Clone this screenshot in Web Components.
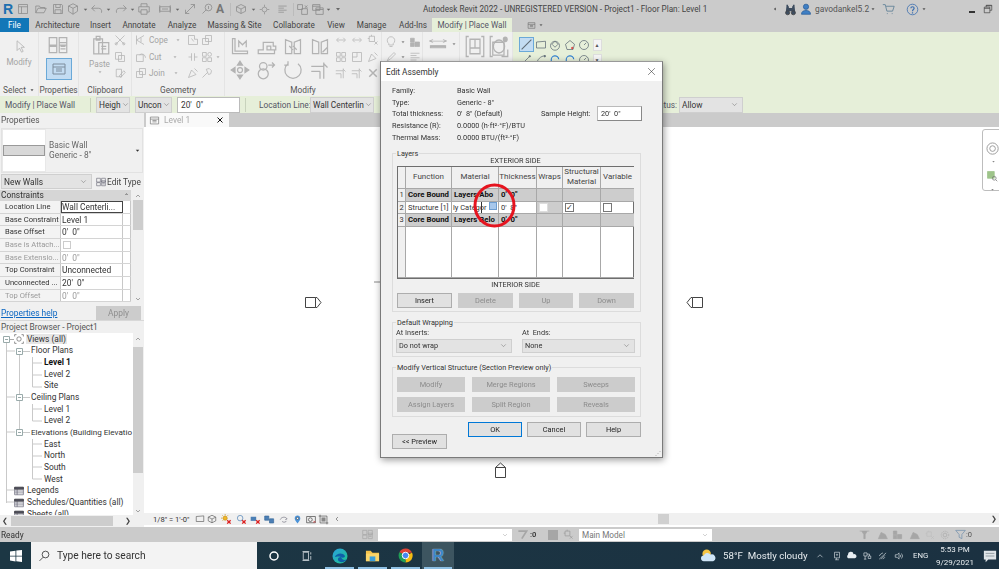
<!DOCTYPE html>
<html lang="en">
<head>
<meta charset="utf-8">
<title>Autodesk Revit 2022</title>
<style>
  html, body { margin: 0; height: 100%; overflow: hidden; background: #fff; }
  body { font-family: Roboto, "Noto Sans", sans-serif; }
</style>
</head>
<body>
<rv-app></rv-app>
<script>
'use strict';

// icon bodies, all on a 16x16 grid, stroke comes from currentColor
const ICONS = {
  cursor: '<path d="M5 1v12l3-3 2.500 5 2-1-2.500-5H14z"/>',
  page: '<path d="M2 2h12v12H2zM2 5h12M6 5v9"/>',
  open: '<path d="M1 13V4h5l1 2h6v2M1 13l3-6h11l-3 6z"/>',
  save: '<path d="M2 2h11l1 1v11H2zM5 2v4h6V2M4 14V9h8v5"/>',
  sync: '<path d="M8 1l6 3v7l-6 4-6-4V4zM2 4l6 3 6-3M8 7v8"/>',
  undo: '<path d="M5 3L1 7l4 4M1 7h9c3 0 5 2 4 6"/>',
  redo: '<path d="M11 3l4 4-4 4M15 7H6c-3 0-5 2-4 6"/>',
  print: '<path d="M4 5V1h8v4M4 12H1V5h14v7h-3M4 9h8v6H4z"/>',
  measure: '<path d="M1 5h14v6H1zM1 3v10M15 3v10M4 8h8"/>',
  align: '<path d="M2 14L14 2M2 9v5h5M9 2h5v5"/>',
  tag: '<path d="M2 14l5-5"/><circle cx="10" cy="6" r="4.500"/><path d="M10 4v4"/>',
  cube: '<path d="M8 2l6 3v6l-6 3-6-3V5zM2 5l6 3 6-3M8 8v6"/>',
  section: '<circle cx="8" cy="8" r="3.500"/><path d="M8 1v3M8 12v3M1 8h3M12 8h3"/>',
  lines: '<path d="M2 3h12M2 6h8M2 9h12M2 12h8"/>',
  closeh: '<path d="M2 2h6v6H2zM7 7h7v7H7zM11 3l3 3M14 3l-3 3"/>',
  windows: '<path d="M2 2h9v7H2zM6 6h9v8H6zM2 4h9M6 8h9"/>',
  caret: '<path d="M4 6h8l-4 5z" fill="currentColor" stroke="none"/>',
  chevron: '<path d="M4 6l4 4 4-4"/>',
  pile: '<path d="M1 2h6v6H1zM9 2h6v6H9zM1 9h6v5H1zM9 6h6v8H9zM10 9h4M10 11h4"/>',
  props: '<path d="M2 3h12v10H2zM2 6h12M5 8h6M5 10h6"/>',
  paste: '<path d="M3 3h7v12H3zM5 1h3v3H5zM7 6h8v9H7zM9 9h4M9 11h4"/>',
  scissors: '<path d="M2 2l12 12M14 2L2 14"/><circle cx="3" cy="13" r="1.500"/><circle cx="13" cy="13" r="1.500"/>',
  copy: '<path d="M2 2h8v9H2zM6 6h8v8H6z"/>',
  match: '<path d="M3 3h7v10H3zM7 12l6-7 2 2-6 7z"/>',
  cope: '<path d="M2 2v12M2 8l10-6M2 8l10 6M8 5v6"/>',
  cut: '<path d="M2 5h9v9H2zM6 5a5 5 0 0 1 8 4"/>',
  join: '<path d="M2 6h8v8H2zM6 2h8v8H6z"/>',
  wallj: '<path d="M2 2h8v5h4v7H2zM6 6l3 4"/>',
  shapes: '<path d="M2 2h5v5H2zM9 9h5v5H9zM9 4.500a2.500 2.500 0 1 0 5 0 2.500 2.500 0 1 0-5 0M2 9h5v5H2z"/>',
  hammer: '<path d="M2 14l7-7M7 3l4-1 3 3-1 4-3 1z"/>',
  pin: '<path d="M2 14L6 4l6 6zM10 2l4 4"/>',
  levels: '<path d="M2 14V2h2v10h10v2zM7 9V4l3 3 3-3v5"/>',
  offset: '<path d="M1 11h4V5h8v3h2v3h-4V8H8v3h6v3H1z"/>',
  gate: '<path d="M2 14V3l5 2v9zM14 14V3L9 5v9zM5 8l3 3M8 8l3 3"/>',
  mirror: '<path d="M2 14V3l5 2v9zM14 14V3L9 5v9zM10 13l4-4"/>',
  move: '<path d="M8 1l2 3H6zM8 15l2-3H6zM1 8l3-2v4zM15 8l-3-2v4z" fill="currentColor"/><circle cx="8" cy="8" r="2"/>',
  copy2: '<circle cx="5" cy="11" r="4"/><circle cx="5" cy="5" r="3"/><path d="M9 4h5M12 2l2 2-2 2"/>',
  rotate: '<path d="M12 3a6.500 6.500 0 1 1-8 0M4 1v3H1"/>',
  trim: '<path d="M1 5h10M1 9h7M11 2v13M14 6l-3-3M8 9v6"/>',
  ends: '<path d="M3 8h10M5 5L2 8l3 3M11 5l3 3-3 3"/>',
  grid4: '<path d="M2 2h5v5H2zM9 2h5v5H9zM2 9h5v5H2zM9 9h5v5H9z"/>',
  square: '<path d="M2 2h12v12H2zM2 8h6V2"/>',
  pinx: '<path d="M3 3h7v7H3zM10 10l4 4M14 10l-4 4M6 1v2M1 6h2"/>',
  split: '<path d="M2 8h4M10 8h4M6 3v10M10 3v10"/>',
  xmark: '<path d="M3 3l10 10M13 3L3 13" stroke-width="2"/>',
  xthin: '<path d="M2 2l12 12M14 2L2 14"/>',
  bulb: '<path d="M5 10a5 5 0 1 1 6 0v2H5zM6 14h4"/>',
  brush: '<path d="M3 13l2-4 7-7 2 2-7 7z"/>',
  dim: '<path d="M1 4h14M1 4l3-2M1 4l3 2M15 4l-3-2M15 4l-3 2"/><path d="M2 10h12v3H2z" fill="currentColor"/>',
  boxes: '<path d="M3 1H1v14h2M13 1h2v14h-2M4 3h4v6H4zM4 9h8v4H4zM8 3h4v6"/>',
  sphere: '<path d="M3 1H1v14h2M10 15h5v-5"/><path d="M3 5h9v9H3z"/><circle cx="8" cy="8" r="4.500"/><circle cx="13" cy="3" r="1.500" fill="currentColor"/>',
  line: '<path d="M2 14L14 2" stroke-width="1.300"/>',
  rect: '<path d="M2 4l12-1v9H2z"/>',
  poly1: '<circle cx="8" cy="9" r="6"/><path d="M8 3l4 4-4 4-4-4z"/>',
  poly2: '<path d="M8 2l6 5-2 7H4L2 7z"/><circle cx="11" cy="12" r="1" fill="#d33" stroke="#d33"/>',
  circle: '<circle cx="8" cy="8" r="6"/><path d="M8 8l3-3"/>',
  spline: '<path d="M2 14L12 4"/><circle cx="13" cy="3" r="1" fill="currentColor"/>',
  arc: '<path d="M2 14C3 7 7 3 14 2"/><circle cx="13" cy="3" r="1" fill="currentColor"/>',
  arcb: '<path d="M3 14V8a5 5 0 0 1 10-1" stroke="#2f7fd0" stroke-width="1.500"/>',
  views: '<path d="M1 4V1h3M12 1h3v3M1 12v3h3M15 12v3h-3"/><circle cx="8" cy="8" r="3.500"/>',
  list: '<path d="M1 2h14v12H1zM1 5h14M1 8h14M1 11h14M5 5v9" stroke="#556"/><path d="M1 2h14v3H1z" fill="#556"/>',
  binoc: '<path d="M2 13l1-9h3v9zM14 13l-1-9h-3v9zM6 6h4v4H6zM3 2h2v2H3zM11 2h2v2h-2z" fill="#3d4d60" stroke="none"/><circle cx="4.500" cy="12" r="2.500" fill="#3d4d60"/><circle cx="11.500" cy="12" r="2.500" fill="#3d4d60"/>',
  user: '<circle cx="8" cy="5" r="3.500" fill="#3f7fc4" stroke="#2a5e9a"/><path d="M2 15c0-4 3-5 6-5s6 1 6 5z" fill="#3f7fc4" stroke="#2a5e9a"/>',
  cart: '<path d="M1 2h3l2 8h7l2-6H5M6 13h1M12 13h1"/>',
  help: '<circle cx="8" cy="8" r="6.500" stroke="#3c6fb0"/><path d="M6 6.500C6 4 10 4 10 6.500 10 8 8 8 8 10M8 11.500v1.500" stroke="#3c6fb0" stroke-width="1.500"/>',
  restore: '<path d="M5 5V2h9v8h-3M2 5h9v9H2zM2 7h9M5 2.800h9" stroke="#333"/>',
  search: '<circle cx="10" cy="6" r="4.500"/><path d="M7 9.500L2 14.500"/>',
  taskview: '<path d="M3 3h7v10H3zM2 2h9M2 14h9M13 3v3M13 8v5"/>',
  notify: '<path d="M1 2h14v10H6l-3 3v-3H1z" fill="#dfe4e8" stroke="none"/><path d="M3 5h10M3 8h10" stroke="#8a959c"/>',
  tower: '<path d="M1 3h14M4 3l3 5v6h2V8l3-5" fill="currentColor"/>',
  house: '<path d="M2 14l4-9 6 3 3 6zM4 10h9" fill="currentColor"/>',
  blocks: '<path d="M2 3h5v5H2zM8 8h6v6H8zM2 9h5v5H2z" fill="currentColor"/>',
  funnel: '<path d="M1 2h14L10 8v6l-4-2V8z" stroke="#6d8cab"/>',
  gear: '<circle cx="8" cy="8" r="3"/><circle cx="8" cy="8" r="6" stroke-dasharray="2 1.500"/>',
  sunx: '<circle cx="6" cy="6" r="3" fill="#f0b82a" stroke="#c89015"/><path d="M6 0v2M0 6h2M2 2l1 1M10 2L9 3M2 10l1-1" stroke="#c89015"/><path d="M9 9l5 5M14 9l-5 5" stroke="#d22" stroke-width="2"/>',
  glassx: '<circle cx="6" cy="6" r="4" stroke="#4b7fb5"/><path d="M9 9l5 5M14 9l-5 5" stroke="#d22" stroke-width="2"/>',
  shadow: '<path d="M1 4h8v6H1z" fill="#4b7fb5" stroke="none"/><path d="M9 9l5 5M14 9l-5 5" stroke="#d22" stroke-width="2"/>',
  blue3d: '<path d="M1 3h6v6H1zM8 7h6v6H8z" fill="#4b7fb5" stroke="#3a6a9a"/>',
  swirl: '<path d="M2 9c2-5 9-5 11-1M13 8l-3 1M5 12c3 2 6 1 7-1"/>',
  drop: '<path d="M8 1c3 0 5 2 5 5s-3 6-5 9c-2-3-5-6-5-9s2-5 5-5z" fill="#4b93d8" stroke="none"/><circle cx="8" cy="6" r="2" fill="#fff"/>',
  cam: '<path d="M1 4h14v10H1z" stroke="#333"/><circle cx="7" cy="9" r="3" stroke="#333"/><path d="M12 11l3 3M15 11l-3 3" stroke="#c33"/>',
  crop: '<path d="M3 1v12h12M1 3h12v12" stroke="#555"/><path d="M5 5h6v6H5z" fill="#888" stroke="none"/>',
  worksets: '<path d="M2 3h12L7 14" stroke-width="2.500"/>',
  edge: '<defs><linearGradient id="e" x1="0" y1="0" x2="1" y2="1"><stop offset="0" stop-color="#2aa0e0"/><stop offset="1" stop-color="#1fc58a"/></linearGradient></defs><circle cx="8" cy="8" r="7.500" fill="url(#e)" stroke="none"/><path d="M3 9c1-4 8-5 10-1 0 2-3 2-4 1 1 3 4 4 6 2-2 4-8 4-9 1-.5-2 1-3 3-3-3-1-5 0-6 0z" fill="#0f5fa8" stroke="none"/>',
  folder: '<path d="M1 3h5l2 2h7v9H1z" fill="#f4c24a" stroke="none"/><path d="M1 6h14v8H1z" fill="#fbd66a" stroke="none"/><path d="M5 9h6v5H5z" fill="#3ba0dc" stroke="none"/>',
  chrome: '<path d="M8 8L1.500 4.500A7.500 7.500 0 0 1 15 5H8z" fill="#dd4437" stroke="none"/><path d="M8 8l7-3a7.500 7.500 0 0 1-7 10.500z" fill="#f5bb12" stroke="none"/><path d="M8 8v7.500A7.500 7.500 0 0 1 1.500 4.500z" fill="#1f9e57" stroke="none"/><circle cx="8" cy="8" r="3.500" fill="#4587f2" stroke="#fff"/>',
  weather: '<circle cx="6" cy="6" r="4.500" fill="#f6c544" stroke="none"/><path d="M3 14a3 3 0 0 1 0-6 4 4 0 0 1 7-1 3.500 3.500 0 0 1 3 7z" fill="#cfe5f7" stroke="none"/>',
  cloud: '<path d="M3 12a3 3 0 0 1 0-5 4 4 0 0 1 8-1 3 3 0 0 1 2 6z" fill="#e8eef2" stroke="none"/>',
  wifi: '<path d="M2 13L13 3M5 13l6-6M8 13l3-3M2 8a9 9 0 0 1 6-5"/>',
  speaker: '<path d="M2 6h3l3-3v10l-3-3H2zM10 6a3 3 0 0 1 0 4M12 4a6 6 0 0 1 0 8"/>',
  net: '<path d="M3 3h5v5H3zM10 8h4v4h-4zM5 8v5M8 5h4v3M3 13h4"/>',
  meet: '<path d="M4 2h8v9H4zM7 11v3M5 14h6M7 6a1 1 0 1 0 2 0 1 1 0 1 0-2 0"/>',
  nav: '<circle cx="7" cy="7" r="6"/><circle cx="7" cy="7" r="3"/>',
  zoomv: '<path d="M2 2h9v9H2z" fill="#9ec48a" stroke="#9ec48a"/><circle cx="11" cy="11" r="2.500" stroke="#777"/><path d="M13 13l2 2" stroke="#777"/>'
};

const RESET = '*,*::before,*::after{box-sizing:border-box}';

// tiny base class: each element just says what goes in its shadow root
class RvElement extends HTMLElement {
  constructor() {
    super();
    this.attachShadow({ mode: 'open' }).innerHTML =
      `<style>${RESET}${this.constructor.css}</style>${this.constructor.html}`;
  }
}

class RvIcon extends HTMLElement {
  connectedCallback() {
    if (this.shadowRoot) return;
    const size = this.getAttribute('size') || 12;
    const h = this.getAttribute('h') || size;
    const name = this.getAttribute('name');
    const root = this.attachShadow({ mode: 'open' });
    root.innerHTML = `<style>:host{display:inline-flex;flex:none;line-height:0}</style>
      <svg width="${size}" height="${h}" viewBox="0 0 16 16" fill="none" stroke="currentColor" stroke-width="1" preserveAspectRatio="none">${ICONS[name] || ''}</svg>`;
  }
}
customElements.define('rv-icon', RvIcon);

class RvSelect extends RvElement {
  static css = `
    :host{display:flex;align-items:center;justify-content:space-between;background:#e3e3e3;border:1px solid #cfcfcf;color:#333;padding:0 3px 0 2px;white-space:nowrap;overflow:hidden}
    rv-icon{color:#777}`;
  static html = '<span><slot></slot></span><rv-icon name="chevron" size="9"></rv-icon>';
}
customElements.define('rv-select', RvSelect);

class RvButton extends RvElement {
  static css = `
    :host{display:flex;align-items:center;justify-content:center;height:15px;background:#e1e1e1;border:1px solid #adadad;color:#222;font-size:7.400px;white-space:nowrap}
    :host([off]){background:#cccccc;border-color:#cccccc;color:#8c8c8c}
    :host([main]){border:1.500px solid #0078d7}`;
  static html = '<slot></slot>';
}
customElements.define('rv-button', RvButton);

class RvGroup extends RvElement {
  static css = `
    :host{display:block;position:relative;border:1px solid #dcdcdc}
    span{position:absolute;left:3px;top:-6px;line-height:11px;padding:0 1px;background:#f0f0f0;font-size:7.300px;color:#333}`;
  static html = '<span><slot name="label"></slot></span><slot></slot>';
}
customElements.define('rv-group', RvGroup);

// quick access toolbar: [icon, centre x, size]
const QAT = [
  ['page', 23, 12], ['open', 41, 12], ['save', 58, 12], ['sync', 73, 12], ['caret', 85, 7],
  ['undo', 97, 12], ['caret', 108, 7], ['redo', 121, 12], ['caret', 132, 7], ['print', 144, 12],
  ['measure', 165, 12], ['caret', 177, 7], ['align', 190, 12], ['tag', 207, 12], ['A', 220, 10],
  ['|', 230, 1], ['cube', 241, 12], ['caret', 253, 7], ['section', 264, 11], ['lines', 282, 11],
  ['|', 293, 1], ['closeh', 302, 13], ['windows', 317, 13], ['caret', 328, 7], ['caret', 338, 8]
];

function qatMarkup() {
  let x = 15;
  return QAT.map(([name, centre, size]) => {
    const gap = centre - size / 2 - x;
    x = centre + size / 2;
    const style = `margin-left:${gap}px`;
    if (name === 'A') return `<span class="big" style="${style}">A</span>`;
    if (name === '|') return `<span class="sep" style="${style}"></span>`;
    const dark = name === 'caret' ? ' class="dd"' : '';
    return `<rv-icon${dark} name="${name}" size="${size}" style="${style}"></rv-icon>`;
  }).join('');
}

class RvTitlebar extends RvElement {
  static css = `
    :host{display:flex;align-items:center;height:18px;background:#cbcbcb;color:#444;font-size:8.400px}
    .logo{width:15px;padding-left:3px;font:bold 14px/18px "Liberation Sans",sans-serif;color:#1d6fb0}
    .qat{display:flex;align-items:center;color:#8a8a8a;width:408px;flex:none}
    .dd{color:#666}
    .big{font:bold 12px/14px Roboto,sans-serif;color:#777;width:10px;text-align:center}
    .sep{width:1px;height:13px;background:#bbb}
    .title{white-space:nowrap;color:#444;font-size:8.200px}
    .right{display:flex;align-items:center;margin-left:auto;padding-right:6px}
    .name{color:#555;margin:0 5px 0 3px;width:50px;white-space:nowrap;font-size:8.400px}`;
  static html = `
    <div class="logo">R</div>
    <div class="qat">${qatMarkup()}</div>
    <div class="title">Autodesk Revit 2022 - UNREGISTERED VERSION - Project1 - Floor Plan: Level 1</div>
    <div class="right">
      <rv-icon name="caret" size="6" style="color:#444;transform:rotate(90deg);margin-right:6px"></rv-icon>
      <rv-icon name="binoc" size="13" style="margin-right:3px"></rv-icon>
      <rv-icon name="user" size="12"></rv-icon>
      <span class="name">gavodankel5.2</span>
      <rv-icon name="caret" size="6" style="color:#555;margin-right:6px"></rv-icon>
      <rv-icon name="cart" size="13" style="color:#5a7d94;margin-right:11px"></rv-icon>
      <rv-icon name="help" size="13" style="margin-right:2px"></rv-icon>
      <rv-icon name="caret" size="6" style="color:#555;margin-right:42px"></rv-icon>
      <span style="width:6px;height:2px;background:#333;margin:6px 8px 0 0"></span>
      <rv-icon name="restore" size="10"></rv-icon>
    </div>`;
}
customElements.define('rv-titlebar', RvTitlebar);

class RvTabs extends RvElement {
  static css = `
    :host{display:flex;align-items:stretch;height:14px;background:#cbcbcb;font-size:8.200px;color:#444;white-space:nowrap}
    span{display:flex;align-items:center;justify-content:center}
    .file{width:29px;background:#1277b8;color:#fff;margin-right:7px}
    .ctx{background:#e6efd9;width:80px;margin:0 15px 0 6px;color:#556}
    .mini{display:flex;align-items:center;gap:2px;color:#666}`;
  static html = `
    <span class="file">File</span>
    <span style="width:43px;margin-right:12px">Architecture</span>
    <span style="width:19px;margin-right:13px">Insert</span>
    <span style="width:32px;margin-right:13px">Annotate</span>
    <span style="width:28px;margin-right:12px">Analyze</span>
    <span style="width:53px;margin-right:12px">Massing &amp; Site</span>
    <span style="width:42px;margin-right:12px">Collaborate</span>
    <span style="width:18px;margin-right:12px">View</span>
    <span style="width:29px;margin-right:14px">Manage</span>
    <span style="width:26px">Add-Ins</span>
    <span class="ctx">Modify | Place Wall</span>
    <div class="mini"><rv-icon name="props" size="9"></rv-icon><rv-icon name="caret" size="6"></rv-icon></div>`;
}
customElements.define('rv-tabs', RvTabs);

class RvRibbon extends RvElement {
  static css = `
    :host{display:flex;height:64px;background:#e6efd9;font-size:8.200px;color:#a4a4a4;white-space:nowrap}
    .panel{display:flex;flex-direction:column;background:#f0f0f0;flex:none;border-right:1px solid #e4e4e4}
    .body{height:51px;display:flex;position:relative}
    .label{height:13px;line-height:12px;text-align:center;color:#555;font-size:8.300px;display:flex;align-items:center;justify-content:center;gap:3px}
    .green{background:#e6efd9;border:0}
    .col{display:flex;flex-direction:column;align-items:center}
    .rows{display:grid;grid-auto-rows:16.500px;align-items:center;justify-items:center}
    rv-icon{color:#b3b3b3}
    .cell{display:flex;align-items:center;gap:2px;justify-self:start}
    .active{margin-top:26px;width:26px;height:22px;background:#c3dcf2;border:1px solid #6aa9d8;display:flex;align-items:center;justify-content:center}
    .active rv-icon{color:#7d8c9c}
    .draw{display:grid;grid-template-columns:14.500px 14.500px 14.500px 14.500px 14.500px 11px;grid-auto-rows:15px;align-items:center;justify-items:center;padding:5px 0 0 6px}
    .draw rv-icon{color:#5f6b75}
    .scroll{width:9px;height:12px;background:#f4f4f4;border:1px solid #ddd;display:flex;align-items:center;justify-content:center;font-size:5px;color:#555}
    .sel{display:flex;background:#c3dcf2;outline:1px solid #6aa9d8}`;
  static html = `
    <div class="panel" style="width:39px">
      <div class="body col" style="padding-top:8px">
        <rv-icon name="cursor" size="13"></rv-icon>
        <span style="margin-top:4px">Modify</span>
      </div>
      <div class="label">Select <rv-icon name="caret" size="6" style="color:#555"></rv-icon></div>
    </div>
    <div class="panel" style="width:40px">
      <div class="body" style="justify-content:center">
        <rv-icon name="pile" size="20" style="position:absolute;top:3px;left:9px"></rv-icon>
        <div class="active"><rv-icon name="props" size="16"></rv-icon></div>
      </div>
      <div class="label">Properties</div>
    </div>
    <div class="panel" style="width:53px">
      <div class="body" style="padding-left:8px">
        <div class="col" style="width:25px;padding-top:3px">
          <rv-icon name="paste" size="20"></rv-icon>
          <span style="margin-top:4px;line-height:10px">Paste</span>
          <rv-icon name="caret" size="6"></rv-icon>
        </div>
        <div class="rows" style="width:16px">
          <rv-icon name="scissors"></rv-icon><rv-icon name="copy"></rv-icon><rv-icon name="match"></rv-icon>
        </div>
      </div>
      <div class="label">Clipboard</div>
    </div>
    <div class="panel" style="width:93px">
      <div class="body rows" style="grid-template-columns:49px 17px 22px;padding-left:3px">
        <div class="cell"><rv-icon name="cope"></rv-icon>Cope <rv-icon name="caret" size="6" style="margin-left:5px"></rv-icon></div>
        <rv-icon name="wallj"></rv-icon><rv-icon name="join" style="justify-self:start"></rv-icon>
        <div class="cell"><rv-icon name="cut"></rv-icon>Cut <rv-icon name="caret" size="6" style="margin-left:8px"></rv-icon></div>
        <rv-icon name="split"></rv-icon><div class="cell"><rv-icon name="shapes"></rv-icon><rv-icon name="caret" size="6"></rv-icon></div>
        <div class="cell"><rv-icon name="join"></rv-icon>Join <rv-icon name="caret" size="6" style="margin-left:6px"></rv-icon></div>
        <rv-icon name="pin"></rv-icon><rv-icon name="hammer" style="justify-self:start"></rv-icon>
      </div>
      <div class="label">Geometry</div>
    </div>
    <div class="panel" style="width:157px">
      <div class="body">
        <div class="rows" style="grid-template-columns:repeat(4,26.500px);grid-auto-rows:24px;padding-top:2px;padding-left:2px">
          <rv-icon name="levels" size="20"></rv-icon><rv-icon name="offset" size="20"></rv-icon>
          <rv-icon name="gate" size="20"></rv-icon><rv-icon name="mirror" size="20"></rv-icon>
          <rv-icon name="move" size="20"></rv-icon><rv-icon name="copy2" size="20"></rv-icon>
          <rv-icon name="rotate" size="20"></rv-icon><rv-icon name="trim" size="20"></rv-icon>
        </div>
        <div class="rows" style="grid-template-columns:repeat(3,16px)">
          <rv-icon name="ends"></rv-icon><rv-icon name="ends"></rv-icon><rv-icon name="pinx"></rv-icon>
          <rv-icon name="grid4"></rv-icon><rv-icon name="square"></rv-icon><rv-icon name="pin"></rv-icon>
          <rv-icon name="trim"></rv-icon><rv-icon name="trim"></rv-icon><rv-icon name="xmark"></rv-icon>
        </div>
      </div>
      <div class="label">Modify</div>
    </div>
    <div class="panel" style="width:41px">
      <div class="body rows" style="grid-template-columns:14px 9px 15px;padding-left:2px;grid-auto-rows:15px;padding-top:2px;height:auto">
        <rv-icon name="bulb" size="12"></rv-icon><rv-icon name="caret" size="6" style="color:#888"></rv-icon><rv-icon name="blocks" size="12"></rv-icon>
        <rv-icon name="brush" size="12"></rv-icon><rv-icon name="caret" size="6" style="color:#888"></rv-icon><rv-icon name="lines" size="12"></rv-icon>
      </div>
    </div>
    <div class="panel" style="width:37px">
      <div class="body" style="padding:6px 0 0 5px;gap:3px"><rv-icon name="dim" size="20" h="12"></rv-icon><rv-icon name="caret" size="6" style="margin-top:3px;color:#888"></rv-icon></div>
    </div>
    <div class="panel" style="width:53px">
      <div class="body" style="padding:3px 0 0 5px;gap:4px"><rv-icon name="boxes" size="20" h="23"></rv-icon><rv-icon name="sphere" size="20" h="23"></rv-icon></div>
    </div>
    <div class="panel green" style="width:90px">
      <div class="draw">
        <span class="sel"><rv-icon name="line" size="13"></rv-icon></span>
        <rv-icon name="rect" size="12"></rv-icon>
        <rv-icon name="poly1" size="12"></rv-icon>
        <rv-icon name="poly2" size="12"></rv-icon>
        <rv-icon name="circle" size="12"></rv-icon>
        <div class="scroll">▲</div>
        <rv-icon name="spline" size="12"></rv-icon>
        <rv-icon name="arc" size="12"></rv-icon>
        <rv-icon name="arcb" size="12"></rv-icon>
        <rv-icon name="arcb" size="12"></rv-icon>
        <rv-icon name="circle" size="12"></rv-icon>
        <div class="scroll">▼</div>
      </div>
    </div>`;
}
customElements.define('rv-ribbon', RvRibbon);

class RvOptions extends RvElement {
  static css = `
    :host{display:flex;align-items:center;height:17px;background:#e6efd9;font-size:8.300px;color:#444;white-space:nowrap}
    .sep{width:1px;height:14px;background:#c8d2bc;margin:0 5px}
    rv-select{height:16px}
    .input{height:16px;width:63px;background:#fff;border:1px solid #bbb;padding:0 3px;line-height:14px;color:#333;margin-left:5px}`;
  static html = `
    <span style="width:85px;padding-left:5px;color:#556">Modify | Place Wall</span>
    <span class="sep"></span>
    <rv-select style="width:34px">Heigh</rv-select>
    <rv-select style="width:37px;margin-left:5px">Uncon</rv-select>
    <div class="input">20'&nbsp;&nbsp;0"</div>
    <span class="sep"></span>
    <span style="width:49px;margin-left:8px;color:#556">Location Line:</span>
    <rv-select style="width:64px;margin-left:2px">Wall Centerlin</rv-select>
    <span style="margin-left:auto;color:#556">atus:</span>
    <rv-select style="width:64px;margin:0 256px 0 2px">Allow</rv-select>`;
}
customElements.define('rv-options', RvOptions);

class RvProperties extends RvElement {
  static css = `
    :host{display:flex;flex-direction:column;height:207px;background:#f0f0f0;font-size:8.400px;color:#333;white-space:nowrap;overflow:hidden}
    .head{height:15px;line-height:14px;padding-left:1px;color:#555}
    .type{height:45px;margin:0 1px;border:1px solid #e2e2e2;display:flex;align-items:center}
    .thumb{width:44px;height:43px;background:#fff;border:1px solid #e8e8e8;display:flex;align-items:center}
    .thumb i{display:block;width:100%;height:11px;background:#d8d8d8;border:1px solid #999}
    .names{margin-left:3px;line-height:10.500px;color:#666;flex:1}
    .bar{height:16px;display:flex;align-items:center;margin-top:1px}
    .edit{display:flex;align-items:center;gap:1px;margin-left:4px;color:#444}
    .grid{display:flex;height:114px}
    .table{width:131px}
    .cat{height:11px;background:#d6d6d6;display:flex;justify-content:space-between;padding:0 2px 0 1px;line-height:11px}
    .row{display:grid;grid-template-columns:61px 62px 8px;height:12.700px;line-height:12px;background:#fff;border-bottom:1px solid #d4d4d4}
    .row span{padding-left:1px;border-right:1px solid #c8c8c8;overflow:hidden}
    .row span:first-child{padding-left:5px;background:#f3f3f3;font-size:7.600px}
    .dim{color:#9a9a9a}
    .focus{outline:1px solid #444;outline-offset:-1px;background:#fff}
    .box{display:block;width:8px;height:8px;border:1px solid #ccc;margin:2px 0 0 1px}
    .sb{width:12px;display:flex;flex-direction:column;align-items:center;justify-content:space-between;margin-left:1px;color:#555;font-size:6px}
    .thumbv{width:10px;height:30px;background:#cdcdcd;margin-bottom:auto}
    .foot{display:flex;align-items:center;justify-content:space-between;height:17px;padding:2px 3px 0 1px}
    a{color:#0a66c2;text-decoration:underline}
    .apply{width:45px;height:14px;background:#cccccc;color:#8e8e8e;text-align:center;line-height:14px}`;
  static html = `
    <div class="head">Properties</div>
    <div class="type">
      <div class="thumb"><i></i></div>
      <div class="names">Basic Wall<br>Generic - 8"</div>
      <rv-icon name="caret" size="7" style="color:#333;margin-right:1px"></rv-icon>
    </div>
    <div class="bar">
      <rv-select style="width:91px;height:15px;margin-left:1px">New Walls</rv-select>
      <div class="edit"><rv-icon name="pile" size="10" style="color:#667"></rv-icon> Edit Type</div>
    </div>
    <div class="grid">
      <div class="table">
        <div class="cat"><span>Constraints</span><span style="font-size:6px">⌃</span></div>
        <div class="row"><span>Location Line</span><span class="focus">Wall Centerli...</span><span></span></div>
        <div class="row"><span>Base Constraint</span><span>Level 1</span><span></span></div>
        <div class="row"><span>Base Offset</span><span>0'&nbsp;&nbsp;0"</span><span></span></div>
        <div class="row"><span class="dim">Base is Attach...</span><span><i class="box"></i></span><span></span></div>
        <div class="row"><span class="dim">Base Extensio...</span><span class="dim">0'&nbsp;&nbsp;0"</span><span></span></div>
        <div class="row"><span>Top Constraint</span><span>Unconnected</span><span></span></div>
        <div class="row"><span>Unconnected ...</span><span>20'&nbsp;&nbsp;0"</span><span></span></div>
        <div class="row"><span class="dim">Top Offset</span><span class="dim">0'&nbsp;&nbsp;0"</span><span></span></div>
      </div>
      <div class="sb">
        <rv-icon name="chevron" size="8" style="transform:rotate(180deg);margin-top:2px"></rv-icon>
        <div class="thumbv"></div>
        <rv-icon name="chevron" size="8"></rv-icon>
      </div>
    </div>
    <div class="foot"><a>Properties help</a><div class="apply">Apply</div></div>`;
}
customElements.define('rv-properties', RvProperties);

class RvBrowser extends RvElement {
  static css = `
    :host{display:flex;flex-direction:column;height:207px;background:#f0f0f0;font-size:8.400px;color:#333;white-space:nowrap;border-top:1px solid #d8d8d8}
    .head{height:12px;line-height:12px;padding-left:1px;color:#555}
    .wrap{display:flex;height:182px}
    .tree{width:133px;background:#fff;overflow:hidden;position:relative;padding-top:.500px}
    .row{height:11.700px;line-height:11.700px;position:relative;white-space:nowrap}
    .hl{background:#e6e6e6;padding:0 1px;margin-left:-1px}
    svg{position:absolute;left:0;top:0}
    .sb{width:10px;display:flex;flex-direction:column;align-items:center;color:#555}
    .tv{width:10px;height:126px;background:#cdcdcd;margin:4px 0 auto}
    .hs{height:11px;width:133px;display:flex;align-items:center;justify-content:space-between;padding:0 2px;color:#444;font-size:7px}
    .hs i{display:block;width:102px;height:10px;background:#cdcdcd;margin-right:10px}
    .ic{position:absolute;left:14px;top:1px}`;
  static html = `
    <div class="head">Project Browser - Project1</div>
    <div class="wrap">
      <div class="tree">
        <svg width="133" height="182" fill="none" stroke="#c9c9c9">
          <path d="M6.500 9V170M19.500 21V100M32.500 24V54M32.500 30H42M32.500 42H42M32.500 54H42M6.500 18H15M6.500 64H15M6.500 99H15M6.500 157H14M6.500 169H14M32.500 71V88M32.500 76H42M32.500 88H42M32.500 106V146M32.500 111H42M32.500 123H42M32.500 134H42M32.500 146H42M23 18.500H30M23 64.500H30M23 99.500H30"/>
          <path d="M9 6.500H14" stroke="#aaa"/>
          <path d="M3.500 3.500h6v6h-6zM5 6.500h3M16.500 15.500h6v6h-6zM18 18.500h3M16.500 61.500h6v6h-6zM18 64.500h3M16.500 96.500h6v6h-6zM18 99.500h3" stroke="#9aa" fill="#fff"/>
        </svg>
        <div class="row" style="padding-left:27px"><rv-icon class="ic" name="views" size="10" style="color:#555;top:.500px"></rv-icon><span class="hl">Views (all)</span></div>
        <div class="row" style="padding-left:31px">Floor Plans</div>
        <div class="row" style="padding-left:44px;font-weight:700;color:#111">Level 1</div>
        <div class="row" style="padding-left:44px">Level 2</div>
        <div class="row" style="padding-left:44px">Site</div>
        <div class="row" style="padding-left:31px">Ceiling Plans</div>
        <div class="row" style="padding-left:44px">Level 1</div>
        <div class="row" style="padding-left:44px">Level 2</div>
        <div class="row" style="padding-left:31px;font-size:8.100px">Elevations (Building Elevatio</div>
        <div class="row" style="padding-left:44px">East</div>
        <div class="row" style="padding-left:44px">North</div>
        <div class="row" style="padding-left:44px">South</div>
        <div class="row" style="padding-left:44px">West</div>
        <div class="row" style="padding-left:27px"><rv-icon class="ic" name="list" size="10"></rv-icon>Legends</div>
        <div class="row" style="padding-left:27px"><rv-icon class="ic" name="list" size="10"></rv-icon>Schedules/Quantities (all)</div>
        <div class="row" style="padding-left:27px;height:11px;overflow:visible"><rv-icon class="ic" name="list" size="10"></rv-icon>Sheets (all)</div>
      </div>
      <div class="sb">
        <rv-icon name="chevron" size="8" style="transform:rotate(180deg);margin-top:2px"></rv-icon>
        <div class="tv"></div>
        <rv-icon name="chevron" size="8"></rv-icon>
      </div>
    </div>
    <div class="hs">
      <span>&#10094;</span><i></i><span>&#10095;</span>
    </div>`;
}
customElements.define('rv-browser', RvBrowser);

class RvViewbar extends RvElement {
  static css = `
    :host{display:flex;align-items:center;height:12px;background:#f0f0f0;font-size:7.600px;color:#333;margin-bottom:2px;padding-left:9px;white-space:nowrap}
    .scale{width:36px}
    .icons{display:flex;align-items:center;gap:4px;margin-left:6px;width:141px}
    .track{flex:1;display:flex;align-items:center;padding-left:322px}
    .track i{display:block;width:11px;height:10px;background:#d0d0d0}
    .end{font-size:7px;margin-right:2px;color:#444}`;
  static html = `
    <span class="scale">1/8" = 1'-0"</span>
    <div class="icons">
      <rv-icon name="rect" size="10" style="color:#555"></rv-icon>
      <rv-icon name="cube" size="10" style="color:#555;margin-left:-2px"></rv-icon>
      <rv-icon name="sunx" size="11"></rv-icon>
      <rv-icon name="glassx" size="11"></rv-icon>
      <rv-icon name="shadow" size="11" style="margin-left:-1px"></rv-icon>
      <rv-icon name="blue3d" size="11" style="margin-left:-1px"></rv-icon>
      <rv-icon name="swirl" size="10" style="color:#667"></rv-icon>
      <rv-icon name="drop" size="9"></rv-icon>
      <rv-icon name="cam" size="10"></rv-icon>
      <rv-icon name="crop" size="11" style="margin-left:-2px"></rv-icon>
      <rv-icon name="chevron" size="8" style="transform:rotate(90deg);color:#333"></rv-icon>
    </div>
    <div class="track"><i></i></div>
    <span class="end">&#10095;</span>`;
}
customElements.define('rv-viewbar', RvViewbar);

class RvWork extends RvElement {
  static css = `
    :host{display:flex;flex-direction:column;flex:1;min-width:0}
    .strip{height:14px;background:#cbcbcb;display:flex;flex:none}
    .tab{width:83px;margin-left:2px;background:#f9f9f9;display:flex;align-items:center;font-size:8.400px;color:#aaa;padding:0 5px 0 3px}
    .tab span{flex:1;margin-left:4px}
    .tab rv-icon{color:#777}
    .tab rv-icon:last-child{color:#111}
    .canvas{flex:1;background:#fff;position:relative}
    .mark{position:absolute}
    .nav{position:absolute;right:-7px;top:2px;width:24px;height:62px;background:#fff;border:1px solid #bdbdbd;border-radius:3px;display:flex;flex-direction:column;padding:12px 0 0 3px;gap:2px;color:#888}`;
  static html = `
    <div class="strip">
      <div class="tab"><rv-icon name="props" size="11"></rv-icon><span>Level 1</span><rv-icon name="xmark" size="8"></rv-icon></div>
    </div>
    <div class="canvas">
      <svg class="mark" style="left:161px;top:169px" width="17" height="13" fill="#fff" stroke="#444"><path d="M.5 1.500h10v10H.5zM10.500 1.500h1.500l4 5-4 5h-1.500"/></svg>
      <svg class="mark" style="left:542px;top:169px" width="17" height="13" fill="#fff" stroke="#444"><path d="M16.500 1.500h-10v10h10zM6.500 1.500H5l-4 5 4 5h1.500"/></svg>
      <svg class="mark" style="left:350px;top:335px" width="13" height="17" fill="#fff" stroke="#444"><path d="M1.500 15.500v-10h10v10zM1.500 5.500L6.500 1l5 4.500"/></svg>
      <svg class="mark" style="left:230px;top:153px" width="6" height="4" stroke="#888"><path d="M0 2h6"/></svg>
      <div class="nav">
        <rv-icon name="nav" size="15" style="color:#999"></rv-icon>
        <rv-icon name="caret" size="5" style="margin-left:5px"></rv-icon>
        <span style="height:1px;background:#ddd;margin:1px 0"></span>
        <rv-icon name="zoomv" size="12"></rv-icon>
        <rv-icon name="caret" size="5" style="margin:3px 0 0 4px"></rv-icon>
      </div>
    </div>
    <rv-viewbar></rv-viewbar>`;
}
customElements.define('rv-work', RvWork);

class RvLayers extends RvElement {
  static css = `
    :host{display:block;position:relative;width:237px;border:1px solid #6e6e6e;background:#fff;font-size:8px;color:#333;white-space:nowrap}
    .g{display:grid;grid-template-columns:8px 46px 47px 38px 26px 38px 33px;grid-template-rows:22px 13px 12px 13px 51px}
    .g>div{border-right:1px solid #a8a8a8;border-bottom:1px solid #a8a8a8;overflow:hidden;line-height:11px;display:flex;align-items:center}
    .g>div:nth-child(7n){border-right:0}
    .h{background:#f0f0f0;justify-content:center;text-align:center;line-height:10px!important;color:#444}
    .n{background:#f0f0f0;justify-content:center;font-size:7.500px}
    .c{background:#cdcdcd;font-weight:700;color:#111;padding-left:2px;font-size:7.800px}
    .v{padding-left:2px;font-size:7.500px}
    .off{background:#cdcdcd}
    i{display:block;width:9px;height:9px;background:#fff;border:1px solid #777;margin-left:2px;line-height:7px;text-align:center;font-style:normal}
    .blue{width:8px;height:8px;background:#a8c8ec;border:1px solid #6d9dd0;position:absolute;left:91px;top:35px}
    .caret{position:absolute;left:83px;top:35px;width:1px;height:11px;background:#333}
    .ring{position:absolute;left:74px;top:16px}`;
  static html = `
    <div class="g">
      <div class="h"></div><div class="h">Function</div><div class="h">Material</div><div class="h">Thickness</div><div class="h">Wraps</div><div class="h">Structural<br>Material</div><div class="h">Variable</div>
      <div class="n">1</div><div class="c">Core Bound</div><div class="c">Layers Abo</div><div class="c">0'&nbsp;&nbsp;0"</div><div class="c"></div><div class="c"></div><div class="c"></div>
      <div class="n">2</div><div class="v">Structure [1]</div><div class="v" style="padding-left:1px">ly Categor</div><div class="v">0'&nbsp;&nbsp;8"</div><div class="off"><i style="border-color:#ddd"></i></div><div><i>&#10003;</i></div><div><i></i></div>
      <div class="n">3</div><div class="c">Core Bound</div><div class="c">Layers Belo</div><div class="c">0'&nbsp;&nbsp;0"</div><div class="c"></div><div class="c"></div><div class="c"></div>
      <div class="n"></div><div></div><div></div><div></div><div></div><div></div><div></div>
    </div>
    <span class="caret"></span>
    <span class="blue"></span>
    <svg class="ring" width="44" height="46" fill="none" stroke="#e5141f" stroke-width="3"><ellipse cx="22.500" cy="22.500" rx="19.500" ry="20.500"/></svg>`;
}
customElements.define('rv-layers', RvLayers);

class RvDialog extends RvElement {
  static css = `
    :host{position:absolute;left:380px;top:61px;width:283px;height:397px;background:#f0f0f0;border:1px solid #7a7a7a;border-top-color:#999;box-shadow:1px 2px 7px rgba(0,0,0,.4);font-size:7.300px;color:#333;white-space:nowrap;display:flex;flex-direction:column}
    .title{height:19px;background:#fff;display:flex;align-items:center;justify-content:space-between;padding:0 6px 0 5px;font-size:8.300px;color:#333;flex:none}
    .body{padding:4px 21px 0 11px;flex:1;display:flex;flex-direction:column}
    .info{display:grid;grid-template-columns:65px 84px 56px 45px;grid-auto-rows:11.600px;align-items:center;margin-bottom:10px}
    .sample{grid-column:3;grid-row:3}
    .in{grid-column:4;grid-row:3;height:15px;background:#fff;border:1px solid #bbb;border-right-color:#888;border-bottom-color:#888;line-height:13px;padding-left:3px}
    .cap{text-align:center;line-height:11px;color:#333;font-size:7.300px}
    .layers{padding:1px 0 0 4px;height:159px;margin-bottom:10px}
    .layers .cap{width:237px}
    .layers .cap2{line-height:12px;margin-bottom:2px}
    .btns{display:grid;grid-template-columns:55px 55px 54px 55px;gap:6px}
    .wrap{height:35px;padding:5px 5px 0 3px;margin-bottom:10px;display:grid;grid-template-columns:116px 113px;column-gap:10px;grid-template-rows:11px 14px}
    .mod{height:50px;padding:9px 5px 0 4px;display:grid;grid-template-columns:68px 78px 78px;column-gap:7px;row-gap:5px;grid-auto-rows:15px}
    .foot{flex:1;display:flex;justify-content:flex-end;position:relative;padding-top:5px;gap:5px}
    .foot rv-button{width:54px}
    .foot .prev{margin-right:auto;margin-top:12px;width:55px}
    .grip{position:absolute;right:-20px;bottom:1px;font-size:6px;color:#999;line-height:6px}`;
  static html = `
    <div class="title"><span>Edit Assembly</span><rv-icon name="xthin" size="9" style="color:#333"></rv-icon></div>
    <div class="body">
      <div class="info">
        <span>Family:</span><span style="grid-column:2/5">Basic Wall</span>
        <span>Type:</span><span style="grid-column:2/5">Generic - 8"</span>
        <span>Total thickness:</span><span>0'&nbsp;&nbsp;8" (Default)</span><span class="sample">Sample Height:</span><div class="in">20'&nbsp;&nbsp;0"</div>
        <span>Resistance (R):</span><span style="grid-column:2/5">0.0000 (h·ft²·°F)/BTU</span>
        <span>Thermal Mass:</span><span style="grid-column:2/5">0.0000 BTU/(ft²·°F)</span>
      </div>
      <rv-group class="layers">
        <span slot="label">Layers</span>
        <div class="cap">EXTERIOR SIDE</div>
        <rv-layers></rv-layers>
        <div class="cap cap2">INTERIOR SIDE</div>
        <div class="btns">
          <rv-button>Insert</rv-button><rv-button off>Delete</rv-button><rv-button off>Up</rv-button><rv-button off>Down</rv-button>
        </div>
      </rv-group>
      <rv-group class="wrap">
        <span slot="label">Default Wrapping</span>
        <span>At Inserts:</span><span>At&nbsp;&nbsp;Ends:</span>
        <rv-select>Do not wrap</rv-select><rv-select>None</rv-select>
      </rv-group>
      <rv-group class="mod">
        <span slot="label">Modify Vertical Structure (Section Preview only)</span>
        <rv-button off>Modify</rv-button><rv-button off>Merge Regions</rv-button><rv-button off>Sweeps</rv-button>
        <rv-button off>Assign Layers</rv-button><rv-button off>Split Region</rv-button><rv-button off>Reveals</rv-button>
      </rv-group>
      <div class="foot">
        <rv-button class="prev">&lt;&lt; Preview</rv-button>
        <rv-button main>OK</rv-button><rv-button>Cancel</rv-button><rv-button style="width:55px">Help</rv-button>
        <span class="grip">⋰</span>
      </div>
    </div>`;
}
customElements.define('rv-dialog', RvDialog);

class RvStatus extends RvElement {
  static css = `
    :host{display:flex;align-items:center;height:15px;background:#cbcbcb;font-size:8.300px;color:#333;white-space:nowrap}
    .w{background:#fff;height:12px;display:flex;align-items:center;justify-content:space-between;padding:0 3px;color:#777;font-size:8.200px}
    rv-icon{color:#a6a6a6}`;
  static html = `
    <span style="width:362px;padding-left:1px">Ready</span>
    <rv-icon name="pile" size="11"></rv-icon>
    <div class="w" style="width:134px;margin-left:5px;justify-content:flex-end"><rv-icon name="chevron" size="8"></rv-icon></div>
    <rv-icon name="worksets" size="11" style="margin-left:5px"></rv-icon>
    <span style="margin-left:2px;font-size:7.500px;width:14px;font-weight:600">:0</span>
    <span style="width:10px;height:10px;background:#a6a6a6;margin-left:4px"></span>
    <rv-icon name="pinx" size="11" style="margin-left:5px;color:#999"></rv-icon>
    <div class="w" style="width:133px;margin-left:5px">Main Model <rv-icon name="chevron" size="8"></rv-icon></div>
    <span style="flex:1"></span>
    <rv-icon name="tower" size="11"></rv-icon>
    <rv-icon name="house" size="11" style="margin-left:7px"></rv-icon>
    <rv-icon name="blocks" size="11" style="margin-left:4px"></rv-icon>
    <rv-icon name="house" size="11" style="margin-left:6px"></rv-icon>
    <rv-icon name="pinx" size="10" style="margin-left:5px;color:#bbb"></rv-icon>
    <rv-icon name="gear" size="10" style="margin-left:5px"></rv-icon>
    <rv-icon name="funnel" size="11" style="margin-left:5px"></rv-icon>
    <span style="font-size:7.500px;width:33px;color:#555">:0</span>`;
}
customElements.define('rv-status', RvStatus);

class RvTaskbar extends RvElement {
  static css = `
    :host{display:flex;align-items:center;height:27px;background:linear-gradient(90deg,#1c3744,#1b3141);color:#e8edf0;white-space:nowrap;font-size:9.500px}
    .start{width:31px;display:flex;justify-content:center}
    .search{width:226px;height:27px;background:#f3f3f3;display:flex;align-items:center;color:#333;font-size:10.200px;padding-left:7px;gap:7px}
    .search rv-icon{color:#222}
    .apps{display:flex;align-items:center;height:27px}
    .app{width:33px;height:27px;display:flex;align-items:center;justify-content:center;position:relative}
    .app.run::after{content:"";position:absolute;left:2px;right:2px;bottom:0;height:2px;background:#8ec0e4}
    .app.on{background:#3d5560;width:32px}
    .r{font:bold 17px/20px "Liberation Sans",sans-serif;color:#3d86c6;text-shadow:0 0 1px #fff}
    .right{margin-left:auto;display:flex;align-items:center;height:27px}
    .clock{text-align:center;font-size:8px;line-height:13px;width:40px;margin-left:6px}`;
  static html = `
    <div class="start">
      <svg width="12" height="12" fill="#fff"><path d="M0 1.500l5.500-.8v5H0zM6.300.6L12 0v5.700H6.300zM0 6.400h5.500v5L0 10.600zM6.300 6.400H12V12l-5.700-.8z"/></svg>
    </div>
    <div class="search"><rv-icon name="search" size="12"></rv-icon><span>Type here to search</span></div>
    <div class="apps">
      <div class="app"><svg width="10" height="10" fill="none" stroke="#fff" stroke-width="1.500"><circle cx="5" cy="5" r="4"/></svg></div>
      <div class="app"><rv-icon name="taskview" size="12" style="color:#dde4e8"></rv-icon></div>
      <div class="app run"><rv-icon name="edge" size="16"></rv-icon></div>
      <div class="app run"><rv-icon name="folder" size="15"></rv-icon></div>
      <div class="app run"><rv-icon name="chrome" size="15"></rv-icon></div>
      <div class="app on run"><span class="r">R</span></div>
    </div>
    <div class="right">
      <rv-icon name="weather" size="15"></rv-icon>
      <span style="margin:0 11px 0 7px;width:81px;font-size:9.700px">58°F&nbsp; Mostly cloudy</span>
      <rv-icon name="chevron" size="10" style="transform:rotate(180deg);color:#dfe6ea"></rv-icon>
      <rv-icon name="meet" size="10" style="color:#dfe6ea;margin-left:7px"></rv-icon>
      <rv-icon name="cloud" size="11" style="margin-left:4px"></rv-icon>
      <rv-icon name="net" size="10" style="color:#dfe6ea;margin-left:5px"></rv-icon>
      <rv-icon name="wifi" size="10" style="color:#dfe6ea;margin-left:6px"></rv-icon>
      <rv-icon name="speaker" size="10" style="color:#dfe6ea;margin-left:6px"></rv-icon>
      <span style="font-size:7.800px;margin-left:9px;width:16px">ENG</span>
      <div class="clock">5:53 PM<br>9/29/2021</div>
      <rv-icon name="notify" size="14" style="margin:0 2px 0 8px"></rv-icon>
    </div>`;
}
customElements.define('rv-taskbar', RvTaskbar);

class RvApp extends RvElement {
  static css = `
    :host{display:flex;flex-direction:column;position:relative;width:999px;height:569px;overflow:hidden;filter:blur(.3px)}
    .main{display:flex;height:414px}
    .left{width:144px;flex:none;display:flex;flex-direction:column}`;
  static html = `
    <rv-titlebar></rv-titlebar>
    <rv-tabs></rv-tabs>
    <rv-ribbon></rv-ribbon>
    <rv-options></rv-options>
    <div class="main">
      <div class="left"><rv-properties></rv-properties><rv-browser></rv-browser></div>
      <rv-work></rv-work>
    </div>
    <rv-status></rv-status>
    <rv-taskbar></rv-taskbar>
    <rv-dialog></rv-dialog>`;
}
customElements.define('rv-app', RvApp);
</script>
</body>
</html>
